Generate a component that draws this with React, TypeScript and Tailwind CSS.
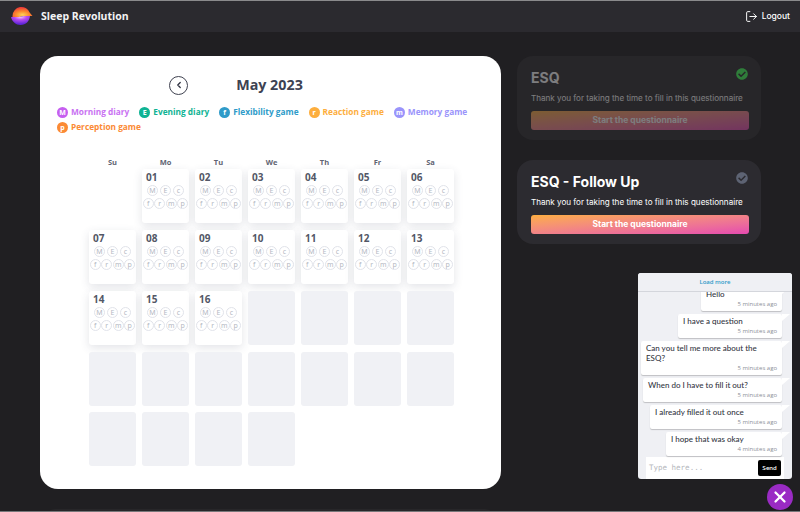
import { ChevronLeft, LogOut, X } from "lucide-react";
import { FaCheckCircle } from "react-icons/fa";

const legend = [
  { letter: "M", label: "Morning diary", dot: "bg-[#c65ff0]", text: "text-[#c972f2]" },
  { letter: "E", label: "Evening diary", dot: "bg-[#0fb394]", text: "text-[#0fb394]" },
  { letter: "f", label: "Flexibility game", dot: "bg-[#2f9bc9]", text: "text-[#2f9bc9]" },
  { letter: "r", label: "Reaction game", dot: "bg-[#fdae3d]", text: "text-[#fdae3d]" },
  { letter: "m", label: "Memory game", dot: "bg-[#9a94fb]", text: "text-[#9a94fb]" },
  { letter: "p", label: "Perception game", dot: "bg-[#fb8a35]", text: "text-[#fb8a35]" },
];

const weekDays = ["Su", "Mo", "Tu", "We", "Th", "Fr", "Sa"];
const filled = Array.from({ length: 16 }, (_, i) => String(i + 1).padStart(2, "0"));

const messages = [
  { text: "Hello", time: "5 minutes ago", width: "w-[81px]" },
  { text: "I have a question", time: "5 minutes ago", width: "w-[104px]" },
  { text: "Can you tell me more about the ESQ?", time: "5 minutes ago", width: "w-[141px]" },
  { text: "When do I have to fill it out?", time: "5 minutes ago", width: "w-[139px]" },
  { text: "I already filled it out once", time: "5 minutes ago", width: "w-[132px]" },
  { text: "I hope that was okay", time: "4 minutes ago", width: "w-[116px]" },
];

function Bubble({ letter }: { letter: string }) {
  return (
    <span className="flex h-[11px] w-[11px] shrink-0 items-center justify-center rounded-full border border-[#e1e3ea] text-[7px] leading-none text-[#b4b8c2]">
      {letter}
    </span>
  );
}

function DayCell({ day }: { day: string }) {
  return (
    <div className="h-[54px] rounded-[3px] bg-white px-[4px] pt-[2px] shadow-[0_3px_10px_rgba(60,64,90,0.14)]">
      <p className="font-['Open_Sans',sans-serif] text-[10px] font-bold leading-[13px] text-[#535766]">{day}</p>
      <div className="mt-[1px] flex justify-center gap-[2px]">
        {["M", "E", "c"].map(l => <Bubble key={l} letter={l} />)}
      </div>
      <div className="-mx-[3px] mt-[2px] flex justify-center gap-[0.5px]">
        {["f", "r", "m", "p"].map(l => <Bubble key={l} letter={l} />)}
      </div>
    </div>
  );
}

function Questionnaire({ title, done }: { title: string; done?: boolean }) {
  return (
    <div className={`relative h-[84px] w-[244px] rounded-[16px] px-[14px] pt-[12px] ${done ? "bg-[#272629]" : "bg-[#2c2b30]"}`}>
      <FaCheckCircle className={`absolute right-[13px] top-[12px] h-[12px] w-[12px] ${done ? "text-[#2f7d3a]" : "text-[#5d6373]"}`} />
      <div className={done ? "opacity-40" : ""}>
        <p className="font-['Inter',sans-serif] text-[14px] font-bold leading-[20px] text-white">{title}</p>
        <p className="mt-[3px] whitespace-nowrap font-['Inter',sans-serif] text-[8.1px] leading-[14px] text-white">
          Thank you for taking the time to fill in this questionnaire
        </p>
        <button className="mt-[2px] h-[19px] w-[218px] rounded-[3px] bg-gradient-to-br from-[#fdae3d] to-[#e548b0] font-['Inter',sans-serif] text-[8.5px] font-bold text-white">
          Start the questionnaire
        </button>
      </div>
    </div>
  );
}

export default function App() {
  return (
    <div className="relative h-[512px] w-[800px] overflow-hidden border-t border-[#8a8a8c] bg-[#201f22]">
      <header className="flex h-[31px] items-center justify-between bg-[#2b2a2f] pl-[11px] pr-[10px]">
        <div className="flex items-center gap-[8px]">
          <svg width="22" height="21" viewBox="0 0 22 21">
            <defs>
              <radialGradient id="top" cx="0.5" cy="0.75" r="0.75">
                <stop offset="0" stopColor="#ffd35a" />
                <stop offset="0.45" stopColor="#fb8a2e" />
                <stop offset="1" stopColor="#e92f3a" />
              </radialGradient>
              <radialGradient id="bottom" cx="0.5" cy="0.1" r="0.8">
                <stop offset="0" stopColor="#f3c4ff" />
                <stop offset="0.4" stopColor="#b94cf0" />
                <stop offset="1" stopColor="#5d24d8" />
              </radialGradient>
            </defs>
            <path d="M1.5 10a9 9 0 0 1 17.5 -3l2.5 3h-9c-2 0 -3 1 -5 1.500h-6z" fill="url(#top)" />
            <path d="M0.500 11h7c2 0 3 -1 5 -1h6.500c-0.500 5 -4 9 -9.500 9c-4.500 0 -8.500 -3.500 -9.500 -8z" fill="url(#bottom)" />
          </svg>
          <span className="font-['Open_Sans',sans-serif] text-[10.5px] font-bold text-[#f3f3f4]">Sleep Revolution</span>
        </div>
        <div className="flex items-center gap-[4px] text-white">
          <LogOut className="h-[13px] w-[13px]" strokeWidth={1.8} />
          <span className="font-['Inter',sans-serif] text-[8.5px] font-medium">Logout</span>
        </div>
      </header>

      <main className="flex items-start gap-[16px] pl-[40px] pt-[24px]">
        <section className="h-[433px] w-[461px] rounded-[18px] bg-white pt-[19px]">
          <div className="relative flex h-[20px] items-center justify-center pr-[2px]">
            <button className="absolute left-[129px] flex h-[19px] w-[19px] items-center justify-center rounded-full border border-[#3f4250] text-[#2f3240]">
              <ChevronLeft className="h-[10px] w-[10px]" strokeWidth={3} />
            </button>
            <h1 className="font-['Open_Sans',sans-serif] text-[14.3px] font-bold text-[#3d4252]">May 2023</h1>
          </div>
          <div className="mt-[11px] flex w-[440px] flex-wrap gap-x-[10px] gap-y-[3px] pl-[17px]">
            {legend.map(item => (
              <div key={item.letter} className="flex h-[12px] items-center gap-[3px]">
                <span className={`flex h-[11px] w-[11px] items-center justify-center rounded-full text-[7px] font-bold leading-none text-white ${item.dot}`}>
                  {item.letter}
                </span>
                <span className={`font-['Open_Sans',sans-serif] text-[8.3px] font-bold ${item.text}`}>{item.label}</span>
              </div>
            ))}
          </div>
          <div className="ml-[49px] mt-[24px] grid w-[365px] grid-cols-[repeat(7,47px)] gap-x-[6px] gap-y-[6.9px]">
            {weekDays.map(d => (
              <p key={d} className="-mb-[6px] h-[11px] text-center font-['Open_Sans',sans-serif] text-[7.5px] font-bold leading-[11px] text-[#5f6472]">{d}</p>
            ))}
            <div />
            {filled.map(d => <DayCell key={d} day={d} />)}
            {Array.from({ length: 15 }, (_, i) => (
              <div key={i} className="h-[54px] rounded-[3px] bg-[#f0f1f5]" />
            ))}
          </div>
        </section>

        <aside className="flex flex-col gap-[20px]">
          <Questionnaire title="ESQ" done />
          <Questionnaire title="ESQ - Follow Up" />
        </aside>
      </main>

      <div className="ml-[45px] mt-[20px] h-[10px] w-[450px] rounded-t-[16px] bg-[#272629]" />

      <div className="absolute left-[638px] top-[272px] flex h-[206px] w-[154px] flex-col overflow-hidden rounded-[3px] bg-[#eff0f4] font-['Lato',sans-serif]">
        <div className="z-10 flex h-[19px] shrink-0 items-center justify-center border-b border-[#d4d6dc] bg-[#eff0f4] font-['Open_Sans',sans-serif] text-[6px] font-semibold text-[#2f9bc9]">
          Load more
        </div>
        <div className="flex min-h-0 flex-1 flex-col items-end justify-end gap-[3px] pr-[10px]">
          {messages.map(m => (
            <div key={m.text} className={`relative shrink-0 rounded-[2px] bg-white px-[5px] pb-[2px] pt-[2px] shadow-[0_1px_1px_rgba(0,0,0,0.2)] ${m.width}`}>
              <span className="absolute -right-[8px] top-0 h-0 w-0 border-b-[7px] border-l-[8px] border-t-0 border-b-transparent border-l-white" />
              <p className="text-[8px] font-medium leading-[10px] text-[#33363f]">{m.text}</p>
              <p className="mt-[1px] text-right font-['Open_Sans',sans-serif] text-[6px] leading-[9px] text-[#8c8f98]">{m.time}</p>
            </div>
          ))}
        </div>
        <div className="mx-[8px] mt-[1px] flex h-[22px] shrink-0 items-center justify-between bg-white px-[3px]">
          <span className="font-['DejaVu_Sans_Mono',monospace] text-[7.5px] text-[#b5b7bd]">Type here...</span>
          <button className="h-[16px] w-[23px] rounded-[2px] bg-black text-[6.5px] font-semibold text-white">Send</button>
        </div>
      </div>

      <button className="absolute left-[767px] top-[483px] flex h-[26px] w-[26px] items-center justify-center rounded-full bg-[#9a2bc4] text-white">
        <X className="h-[18px] w-[18px]" strokeWidth={3} />
      </button>

      <div className="absolute bottom-0 left-0 h-[1px] w-full bg-[#77777a]" />
    </div>
  );
}
